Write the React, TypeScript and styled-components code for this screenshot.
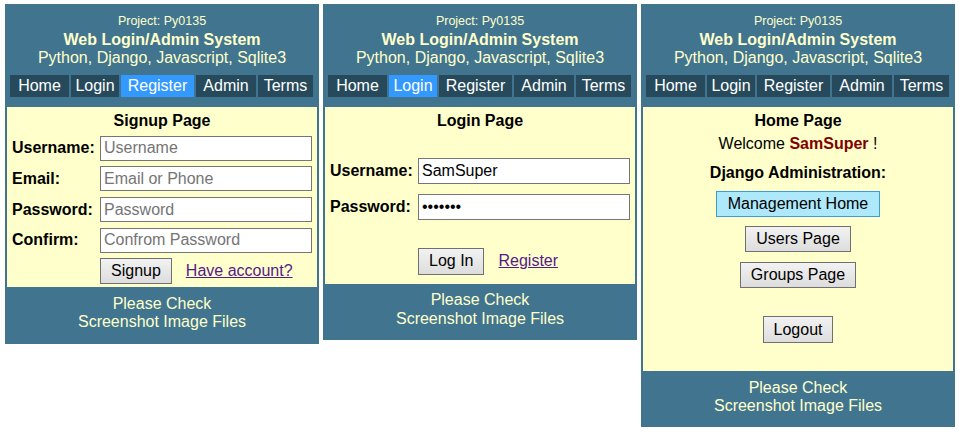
import React from "react";
import styled, { createGlobalStyle } from "styled-components";

const Global = createGlobalStyle`
  html, body { margin: 0; padding: 0; background: #ffffff; }
  body { font-family: "Liberation Sans", Arial, sans-serif; font-size: 16px; }
`;

const Page = styled.div`
  display: flex;
  align-items: flex-start;
  gap: 4px;
  padding: 4px 0 0 5px;
`;

const Panel = styled.section`
  width: 314px;
  box-sizing: border-box;
  background: #41758f;
  padding: 0 2px;
  display: flex;
  flex-direction: column;
`;

const Header = styled.header`
  text-align: center;
  color: #ffffcc;
  padding-top: 10px;
`;

const Project = styled.div`
  font-size: 12.5px;
  line-height: 14px;
  margin-bottom: 3px;
`;

const Title = styled.div`
  font-weight: bold;
  line-height: 18.4px;
`;

const Subtitle = styled.div`
  line-height: 18.4px;
`;

const Nav = styled.nav`
  display: flex;
  gap: 2px;
  margin: 7px 4px 0 3px;
`;

const NavItem = styled.a<{ $w: number; $active?: boolean }>`
  width: ${(p) => p.$w}px;
  height: 22px;
  line-height: 22px;
  text-align: center;
  color: #ffffff;
  text-decoration: none;
  background: ${(p) => (p.$active ? "#3399ff" : "#264a5c")};
`;

const Content = styled.main<{ $pb: number }>`
  background: #ffffcc;
  margin-top: 10px;
  padding: 5px 0 ${(p) => p.$pb}px 0;
  color: #000;
`;

const PageTitle = styled.h2`
  margin: 0;
  font-size: 16px;
  font-weight: bold;
  text-align: center;
  line-height: 18.4px;
`;

const Form = styled.div<{ $mt: number; $gap: number }>`
  display: grid;
  grid-template-columns: 83px 212px;
  column-gap: 5px;
  row-gap: ${(p) => p.$gap}px;
  align-items: center;
  margin-top: ${(p) => p.$mt}px;
  padding-left: 5px;
`;

const Label = styled.label`
  font-weight: bold;
  white-space: nowrap;
`;

const Input = styled.input<{ $h: number }>`
  box-sizing: border-box;
  width: 212px;
  height: ${(p) => p.$h}px;
  border: 1px solid #767676;
  padding: 0 3px;
  font-family: "Liberation Sans", Arial, sans-serif;
  font-size: 16px;
  color: #000;
  background: #fff;
  outline: none;
  &::placeholder { color: #757575; }
`;

const Actions = styled.div<{ $mt: number }>`
  grid-column: 2;
  display: flex;
  align-items: center;
  margin-top: ${(p) => p.$mt}px;
`;

const Button = styled.button<{ $h?: number; $highlight?: boolean }>`
  box-sizing: border-box;
  height: ${(p) => p.$h ?? 26}px;
  padding: 0 ${(p) => (p.$highlight ? 11 : 10)}px;
  font-family: "Liberation Sans", Arial, sans-serif;
  font-size: 16px;
  color: #000;
  border: 1px solid ${(p) => (p.$highlight ? "#3a9fd6" : "#707070")};
  background: ${(p) =>
    p.$highlight ? "#aee8fb" : "linear-gradient(#f2f2f2, #dddddd)"};
  border-radius: 0;
`;

const TextLink = styled.a`
  margin-left: 14px;
  color: #551a8b;
  text-decoration: underline;
`;

const Center = styled.div`
  display: flex;
  flex-direction: column;
  align-items: center;
`;

const Line = styled.div<{ $mt: number; $bold?: boolean }>`
  margin-top: ${(p) => p.$mt}px;
  line-height: 18.4px;
  font-weight: ${(p) => (p.$bold ? "bold" : "normal")};
`;

const UserName = styled.b`
  color: #800000;
`;

const Spaced = styled.div<{ $mt: number }>`
  margin-top: ${(p) => p.$mt}px;
`;

const Footer = styled.footer`
  text-align: center;
  color: #ffffcc;
  padding: 7.5px 0 12px;
  line-height: 18.4px;
`;

const navItems: [string, number][] = [
  ["Home", 59],
  ["Login", 48],
  ["Register", 73],
  ["Admin", 60],
  ["Terms", 55],
];

function Top({ active }: { active?: string }) {
  return (
    <>
      <Header>
        <Project>Project: Py0135</Project>
        <Title>Web Login/Admin System</Title>
        <Subtitle>Python, Django, Javascript, Sqlite3</Subtitle>
      </Header>
      <Nav>
        {navItems.map(([t, w]) => (
          <NavItem key={t} $w={w} $active={t === active}>
            {t}
          </NavItem>
        ))}
      </Nav>
    </>
  );
}

function Bottom() {
  return (
    <Footer>
      Please Check
      <br />
      Screenshot Image Files
    </Footer>
  );
}

export default function App() {
  return (
    <>
      <Global />
      <Page>
        <Panel>
          <Top active="Register" />
          <Content $pb={3}>
            <PageTitle>Signup Page</PageTitle>
            <Form $mt={5.6} $gap={5.6}>
              <Label>Username:</Label>
              <Input $h={25} placeholder="Username" />
              <Label>Email:</Label>
              <Input $h={25} placeholder="Email or Phone" />
              <Label>Password:</Label>
              <Input $h={25} type="password" placeholder="Password" />
              <Label>Confirm:</Label>
              <Input $h={25} type="password" placeholder="Confrom Password" />
              <Actions $mt={0}>
                <Button>Signup</Button>
                <TextLink href="#">Have account?</TextLink>
              </Actions>
            </Form>
          </Content>
          <Bottom />
        </Panel>

        <Panel>
          <Top active="Login" />
          <Content $pb={9}>
            <PageTitle>Login Page</PageTitle>
            <Form $mt={27.6} $gap={10}>
              <Label>Username:</Label>
              <Input $h={26} defaultValue="SamSuper" />
              <Label>Password:</Label>
              <Input $h={26} type="password" defaultValue="1234567" />
              <Actions $mt={18}>
                <Button $h={27}>Log In</Button>
                <TextLink href="#">Register</TextLink>
              </Actions>
            </Form>
          </Content>
          <Bottom />
        </Panel>

        <Panel>
          <Top />
          <Content $pb={28}>
            <PageTitle>Home Page</PageTitle>
            <Center>
              <Line $mt={5.2}>
                Welcome <UserName>SamSuper</UserName> !
              </Line>
              <Line $mt={10.2} $bold>
                Django Administration:
              </Line>
              <Spaced $mt={8.6}>
                <Button $highlight>Management Home</Button>
              </Spaced>
              <Spaced $mt={9}>
                <Button>Users Page</Button>
              </Spaced>
              <Spaced $mt={10}>
                <Button>Groups Page</Button>
              </Spaced>
              <Spaced $mt={28}>
                <Button $h={27}>Logout</Button>
              </Spaced>
            </Center>
          </Content>
          <Bottom />
        </Panel>
      </Page>
    </>
  );
}
